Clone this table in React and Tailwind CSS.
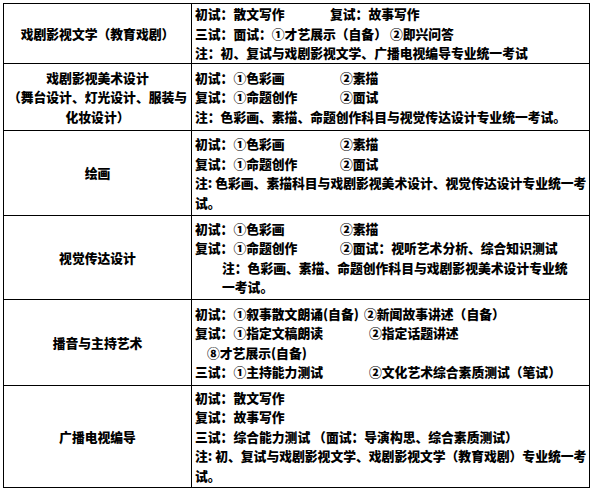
import React from "react";

const L = ({ children, className = "" }) => (
  <div className={"whitespace-nowrap " + className}>{children}</div>
);

const Two = ({ w, a, b, className = "" }) => (
  <div className={"flex whitespace-nowrap " + className}>
    <span className={"shrink-0 " + w}>{a}</span>
    <span>{b}</span>
  </div>
);

const Row = ({ h, left, children }) => (
  <>
    <div
      className={
        "border-r border-b border-black flex flex-col items-center justify-center text-center " +
        h
      }
    >
      {left.map((t, i) => (
        <div key={i} className="whitespace-nowrap">
          {t}
        </div>
      ))}
    </div>
    <div className={"border-r border-b border-black flex flex-col justify-center pl-[3px] " + h}>
      {children}
    </div>
  </>
);

export default function App() {
  return (
    <div className="w-[593px] h-[490px] bg-white pt-[3px] pl-[3px] font-['Noto_Sans_CJK_SC',sans-serif] font-black text-[12.8px] leading-[19.5px] text-black">
      <div className="grid grid-cols-[188px_398px] border-t border-l border-black w-[587px]">
        <Row h="h-[60px]" left={["戏剧影视文学（教育戏剧）"]}>
          <Two w="w-[135px]" a="初试：散文写作" b="复试：故事写作" />
          <L>三试：面试：①才艺展示（自备） ②即兴问答</L>
          <L>注：初、复试与戏剧影视文学、广播电视编导专业统一考试</L>
        </Row>
        <Row
          h="h-[67px]"
          left={["戏剧影视美术设计", "（舞台设计、灯光设计、服装与", "化妆设计）"]}
        >
          <Two w="w-[145px]" a="初试：①色彩画" b="②素描" />
          <Two w="w-[145px]" a="复试：①命题创作" b="②面试" />
          <L>注：色彩画、素描、命题创作科目与视觉传达设计专业统一考试。</L>
        </Row>
        <Row h="h-[85px]" left={["绘画"]}>
          <Two w="w-[145px]" a="初试：①色彩画" b="②素描" />
          <Two w="w-[145px]" a="复试：①命题创作" b="②面试" />
          <L>注: 色彩画、素描科目与戏剧影视美术设计、视觉传达设计专业统一考</L>
          <L>试。</L>
        </Row>
        <Row h="h-[84px]" left={["视觉传达设计"]}>
          <Two w="w-[145px]" a="初试：①色彩画" b="②素描" />
          <Two w="w-[145px]" a="复试：①命题创作" b="②面试：视听艺术分析、综合知识测试" />
          <L className="pl-[27px]">注：色彩画、素描、命题创作科目与戏剧影视美术设计专业统</L>
          <L className="pl-[27px]">一考试。</L>
        </Row>
        <Row h="h-[86px]" left={["播音与主持艺术"]}>
          <Two w="w-[169px]" a="初试：①叙事散文朗诵(自备)" b="②新闻故事讲述（自备）" />
          <Two w="w-[174px]" a="复试：①指定文稿朗读" b="②指定话题讲述" />
          <L className="pl-[12px]">⑧才艺展示(自备)</L>
          <Two w="w-[174px]" a="三试：①主持能力测试" b="②文化艺术综合素质测试（笔试）" />
        </Row>
        <Row h="h-[102px]" left={["广播电视编导"]}>
          <L>初试：散文写作</L>
          <L>复试：故事写作</L>
          <L>三试：综合能力测试 （面试：导演构思、综合素质测试）</L>
          <L>注: 初、复试与戏剧影视文学、戏剧影视文学（教育戏剧）专业统一考</L>
          <L>试。</L>
        </Row>
      </div>
    </div>
  );
}
